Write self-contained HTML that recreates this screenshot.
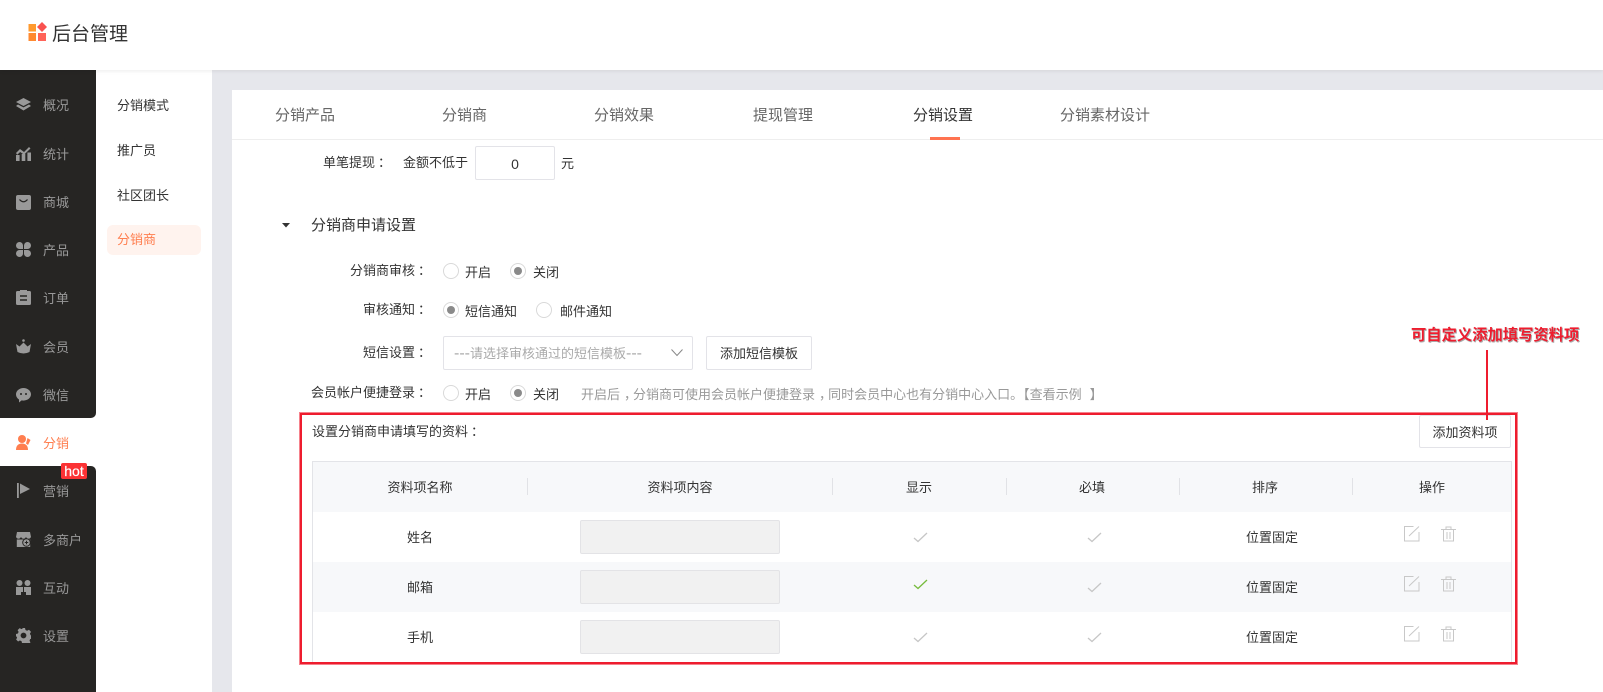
<!DOCTYPE html>
<html lang="zh"><head><meta charset="utf-8"><title>后台管理</title>
<style>
*{box-sizing:border-box}
html,body{margin:0;padding:0;width:1603px;height:692px;overflow:hidden;background:#fff}
body{position:relative;font-family:"Liberation Sans","Noto Sans CJK SC",sans-serif;font-size:13px;color:#333}
.a{position:absolute;white-space:nowrap;line-height:18px}
.b{position:absolute}
.nav{position:absolute;left:43px;color:#999;line-height:18px;font-size:13px;white-space:nowrap}
.ic{position:absolute;left:16px;width:15px;height:15px;fill:#999}
.sub{position:absolute;left:117px;line-height:18px;color:#333}
.tab{position:absolute;top:106px;font-size:15px;line-height:20px;color:#666;white-space:nowrap}
.r{position:absolute;width:16px;height:16px;border:1px solid #d9d9d9;border-radius:50%;background:#fff}
.r.on:after{content:"";position:absolute;left:3px;top:3px;width:8px;height:8px;border-radius:50%;background:#8a8a8a}
.lb{position:absolute;text-align:right;line-height:18px;white-space:nowrap;color:#333}
.co{font-family:"Noto Sans CJK TC",sans-serif;position:relative;left:3px}
.cm{position:relative;left:4px}
.hy{font-size:16px}
.box{position:absolute;border:1px solid #e3e3e8;border-radius:2px;background:#fff}
.th,.c{position:absolute;transform:translateX(-50%);line-height:18px;white-space:nowrap;color:#333}
.dv{position:absolute;top:478px;width:1px;height:17px;background:#e1e2e6}
.inp{position:absolute;left:580px;width:200px;height:34px;background:#f1f1f1;border:1px solid #e3e3e6;border-radius:2px}
.ck,.tool{position:absolute}
</style></head><body>
<div class="b" style="left:0;top:0;width:1603px;height:70px;background:#fff;box-shadow:0 1px 4px rgba(0,0,0,.08);z-index:5"></div>
<svg class="b" style="left:28px;top:22px;z-index:6" width="20" height="20" viewBox="0 0 20 20"><rect x="0.500" y="2" width="7.500" height="7.500" fill="#ff9a2e"/><rect x="0.500" y="11" width="7.500" height="8" fill="#ff8a30"/><rect x="10" y="11" width="8" height="8" fill="#ff6459"/><path d="M14 0l5 5-5 5-5-5z" fill="#f9524f"/></svg>
<div class="a" style="left:52px;top:22px;font-size:19px;line-height:26px;color:#333;z-index:6">后台管理</div>

<div class="b" style="left:0;top:70px;width:96px;height:622px;background:#262523"></div>
<div class="b" style="left:0;top:418px;width:96px;height:48px;background:#fff"></div>
<div class="b" style="left:96px;top:70px;width:116px;height:622px;background:#fff"></div>
<div class="b" style="left:88px;top:410px;width:8px;height:8px;background:#fff"></div>
<div class="b" style="left:88px;top:410px;width:8px;height:8px;background:#262523;border-radius:0 0 5px 0"></div>
<div class="b" style="left:88px;top:466px;width:8px;height:8px;background:#fff"></div>
<div class="b" style="left:88px;top:466px;width:8px;height:8px;background:#262523;border-radius:0 5px 0 0"></div>
<div class="b" style="left:212px;top:70px;width:1391px;height:622px;background:#fff"></div>
<div class="b" style="left:212px;top:70px;width:20px;height:622px;background:#e6e7ec"></div>
<div class="b" style="left:212px;top:70px;width:1391px;height:20px;background:#e6e7ec"></div>

<svg class="ic" style="top:97px" viewBox="0 0 15 15"><path d="M7.500 1L15 5 7.500 9 0 5z"/><path d="M2 7.500L7.500 10.400 13 7.500 15 9 7.500 13.500 0 9z"/></svg>
<div class="nav" style="top:97px">概况</div>
<svg class="ic" style="top:146px" viewBox="0 0 15 15"><rect x="0" y="9" width="3.600" height="6"/><rect x="5.700" y="8" width="3.600" height="7"/><rect x="11.400" y="6.500" width="3.600" height="8.500"/><path d="M0 7l4-4 4 3 5-5 1.500 1.500L8 8.800 4.200 6 1.200 8.800z"/></svg>
<div class="nav" style="top:146px">统计</div>
<svg class="ic" style="top:195px" viewBox="0 0 15 15"><path d="M2 0h11a2 2 0 0 1 2 2v11a2 2 0 0 1-2 2H2a2 2 0 0 1-2-2V2a2 2 0 0 1 2-2z"/><path d="M3.500 4.500Q7.500 9 11.500 4.500" fill="none" stroke="#262523" stroke-width="1.300"/></svg>
<div class="nav" style="top:194px">商城</div>
<svg class="ic" style="top:242px" viewBox="0 0 15 15"><path d="M3.500 0A3.500 3.500 0 0 1 7 3.500V7H3.500a3.500 3.500 0 0 1 0-7zM11.500 0a3.500 3.500 0 0 1 0 7H8V3.500A3.500 3.500 0 0 1 11.500 0zM3.500 8H7v3.500A3.500 3.500 0 1 1 3.500 8zM8 8h3.500A3.500 3.500 0 1 1 8 11.500z"/></svg>
<div class="nav" style="top:242px">产品</div>
<svg class="ic" style="top:290px" viewBox="0 0 15 15"><path d="M1.500 1H4V0h7v1h2.500A1.500 1.500 0 0 1 15 2.500v11a1.500 1.500 0 0 1-1.500 1.500h-12A1.500 1.500 0 0 1 0 13.500v-11A1.500 1.500 0 0 1 1.500 1z"/><path d="M4 6h7M4 10h7" stroke="#262523" stroke-width="1.400"/></svg>
<div class="nav" style="top:290px">订单</div>
<svg class="ic" style="top:339px" viewBox="0 0 15 15"><circle cx="7.500" cy="1.500" r="1.300"/><path d="M0 5l3.500 2.500L7.500 3.500l4 4L15 5l-1.500 8q-6 3-12 0z"/></svg>
<div class="nav" style="top:339px">会员</div>
<svg class="ic" style="top:388px" viewBox="0 0 15 15"><path d="M7.500 0C11.600 0 15 2.800 15 6.300s-3.400 6.300-7.500 6.300c-.7 0-1.300-.1-1.900-.2L3 14.500v-3C1.200 10.400 0 8.500 0 6.300 0 2.800 3.400 0 7.500 0z"/><circle cx="5" cy="6" r="1" fill="#262523"/><circle cx="10" cy="6" r="1" fill="#262523"/></svg>
<div class="nav" style="top:387px">微信</div>
<svg class="ic" style="top:435px;fill:#ff7e4f" viewBox="0 0 15 15"><circle cx="6" cy="4" r="4"/><path d="M0 15c0-4 2-6.500 6-6.500s6 2.500 6 6.500z"/><path d="M11.500 3l3 2-2.500 5-2-1.500z"/></svg>
<div class="nav" style="top:435px;color:#ff7e4f">分销</div>
<div class="b" style="left:61px;top:463px;width:26px;height:16px;background:#fb3234;color:#fff;border-radius:2px;font-size:14px;line-height:16px;text-align:center;-webkit-text-stroke:.2px #fff">hot</div>
<svg class="ic" style="top:483px" viewBox="0 0 15 15"><rect x="1" y="0" width="1.800" height="15"/><path d="M4 .5L14 6 4 11z"/></svg>
<div class="nav" style="top:483px">营销</div>
<svg class="ic" style="top:532px" viewBox="0 0 15 15"><path d="M1 0h13l1 5q-1 1.800-2.500 1.800T10 5q-1 1.800-2.500 1.800T5 5q-1 1.800-2.500 1.800T0 5z"/><path d="M.8 7.500h13.400V15H.8z"/><circle cx="10.500" cy="10.500" r="3.800" stroke="#262523" fill="#999"/><path d="M8.800 10.500h3.400M10.500 8.800v3.400" stroke="#262523"/></svg>
<div class="nav" style="top:532px">多商户</div>
<svg class="ic" style="top:580px" viewBox="0 0 15 15"><circle cx="3.500" cy="3" r="3"/><circle cx="11.500" cy="3" r="3"/><path d="M0 7h7v8H0zM8 7h7v8H8z"/><path d="M5 15v-3h5v3" fill="#262523"/></svg>
<div class="nav" style="top:580px">互动</div>
<svg class="ic" style="top:628px" viewBox="0 0 15 15"><path d="M6 0h3l.5 2 1.600.7L13 1.700l2 2.200-1.100 1.700.7 1.600 1.400.4v3l-1.800.4-.7 1.700 1 1.700-2.100 2-1.800-1-1.600.6L9 15H6l-.5-1.900-1.600-.6-1.800 1-2-2 1-1.800-.7-1.600L0 9V6l1.900-.5.700-1.600-1-1.800 2.100-2 1.700 1 1.600-.7z"/><circle cx="7.500" cy="7.500" r="2.900" fill="#262523"/></svg>
<div class="nav" style="top:628px">设置</div>

<div class="sub" style="top:97px">分销模式</div>
<div class="sub" style="top:142px">推广员</div>
<div class="sub" style="top:187px">社区团长</div>
<div class="b" style="left:107px;top:225px;width:94px;height:30px;background:#fff3ee;border-radius:6px"></div>
<div class="sub" style="top:231px;color:#ff7e4f">分销商</div>

<div class="b" style="left:232px;top:139px;width:1371px;height:1px;background:#eee"></div>
<div class="tab" style="left:275px">分销产品</div>
<div class="tab" style="left:442px">分销商</div>
<div class="tab" style="left:594px">分销效果</div>
<div class="tab" style="left:753px">提现管理</div>
<div class="tab" style="left:913px;color:#333">分销设置</div>
<div class="tab" style="left:1060px">分销素材设计</div>
<div class="b" style="left:930px;top:137px;width:30px;height:3px;background:#ff7350"></div>

<div class="lb" style="top:153px;right:1215px">单笔提现<span class="co">：</span></div>
<div class="a" style="left:403px;top:154px">金额不低于</div>
<div class="box" style="left:475px;top:146px;width:80px;height:34px;text-align:center;line-height:34px;font-size:14px">0</div>
<div class="a" style="left:561px;top:155px">元</div>
<svg class="b" style="left:282px;top:223px" width="8" height="5"><path d="M0 0h8L4 4.500z" fill="#333"/></svg>
<div class="a" style="left:311px;top:216px;font-size:15px;line-height:20px">分销商申请设置</div>

<div class="lb" style="top:261px;right:1175px">分销商审核<span class="co">：</span></div>
<div class="r" style="left:443px;top:263px"></div><div class="a" style="left:465px;top:264px">开启</div>
<div class="r on" style="left:510px;top:263px"></div><div class="a" style="left:533px;top:264px">关闭</div>
<div class="lb" style="top:300px;right:1175px">审核通知<span class="co">：</span></div>
<div class="r on" style="left:443px;top:302px"></div><div class="a" style="left:465px;top:303px">短信通知</div>
<div class="r" style="left:536px;top:302px"></div><div class="a" style="left:560px;top:303px">邮件通知</div>
<div class="lb" style="top:343px;right:1175px">短信设置<span class="co">：</span></div>
<div class="box" style="left:443px;top:336px;width:250px;height:34px"></div>
<div class="a" style="left:454px;top:345px;color:#aaa"><span class="hy">---</span>请选择审核通过的短信模板<span class="hy">---</span></div>
<svg class="b" style="left:671px;top:349px" width="12" height="8"><path d="M.5.500L6 6.500 11.500.500" fill="none" stroke="#888"/></svg>
<div class="box" style="left:706px;top:336px;width:106px;height:34px;text-align:center;line-height:34px">添加短信模板</div>
<div class="lb" style="top:383px;right:1175px">会员帐户便捷登录<span class="co">：</span></div>
<div class="r" style="left:443px;top:385px"></div><div class="a" style="left:465px;top:386px">开启</div>
<div class="r on" style="left:510px;top:385px"></div><div class="a" style="left:533px;top:386px">关闭</div>
<div class="a" style="left:581px;top:386px;color:#999">开启后<span class="cm">，</span>分销商可使用会员帐户便捷登录<span class="cm">，</span>同时会员中心也有分销中心入口。【查看示例<span style="position:relative;left:8px">】</span></div>

<div class="a" style="left:312px;top:422px">设置分销商申请填写的资料<span class="co">：</span></div>
<div class="box" style="left:1419px;top:415px;width:92px;height:33px;text-align:center;line-height:33px">添加资料项</div>

<div class="b" style="left:312px;top:461px;width:1200px;height:202px;border:1px solid #e3e4e8;border-bottom:0"></div>
<div class="b" style="left:313px;top:462px;width:1198px;height:50px;background:#f7f8fa"></div>
<div class="b" style="left:313px;top:562px;width:1198px;height:50px;background:#f7f8fa"></div>
<div class="dv" style="left:527px"></div><div class="dv" style="left:832px"></div><div class="dv" style="left:1006px"></div><div class="dv" style="left:1179px"></div><div class="dv" style="left:1352px"></div>
<div class="th" style="left:420px;top:479px">资料项名称</div>
<div class="th" style="left:680px;top:479px">资料项内容</div>
<div class="th" style="left:919px;top:479px">显示</div>
<div class="th" style="left:1092px;top:479px">必填</div>
<div class="th" style="left:1265px;top:479px">排序</div>
<div class="th" style="left:1432px;top:479px">操作</div>

<div class="c" style="left:420px;top:529px">姓名</div><div class="inp" style="top:520px"></div>
<div class="c" style="left:420px;top:579px">邮箱</div><div class="inp" style="top:570px"></div>
<div class="c" style="left:420px;top:629px">手机</div><div class="inp" style="top:620px"></div>
<div class="c" style="left:1272px;top:529px">位置固定</div>
<div class="c" style="left:1272px;top:579px">位置固定</div>
<div class="c" style="left:1272px;top:629px">位置固定</div>

<svg class="ck" style="left:913px;top:532px" width="15" height="11"><path d="M1 6l4 3.500L14 1" fill="none" stroke="#c6c6c6" stroke-width="1.300"/></svg>
<svg class="ck" style="left:1087px;top:532px" width="15" height="11"><path d="M1 6l4 3.500L14 1" fill="none" stroke="#c6c6c6" stroke-width="1.300"/></svg>
<svg class="ck" style="left:913px;top:579px" width="15" height="11"><path d="M1 6l4 3.500L14 1" fill="none" stroke="#76bb3c" stroke-width="1.300"/></svg>
<svg class="ck" style="left:1087px;top:582px" width="15" height="11"><path d="M1 6l4 3.500L14 1" fill="none" stroke="#c6c6c6" stroke-width="1.300"/></svg>
<svg class="ck" style="left:913px;top:632px" width="15" height="11"><path d="M1 6l4 3.500L14 1" fill="none" stroke="#c6c6c6" stroke-width="1.300"/></svg>
<svg class="ck" style="left:1087px;top:632px" width="15" height="11"><path d="M1 6l4 3.500L14 1" fill="none" stroke="#c6c6c6" stroke-width="1.300"/></svg>

<svg class="tool" style="left:1404px;top:526px" width="16" height="16"><path d="M9.500 .5H.5v14.500h14.500V6M5 10L15 .5" fill="none" stroke="#c8c8c8"/></svg>
<svg class="tool" style="left:1441px;top:526px" width="16" height="16"><path d="M0 3.500h15M5 3V1h5v2M2.500 3.500V15h10V3.500M6 6v7M9 6v7" fill="none" stroke="#c8c8c8"/></svg>
<svg class="tool" style="left:1404px;top:576px" width="16" height="16"><path d="M9.500 .5H.5v14.500h14.500V6M5 10L15 .5" fill="none" stroke="#c8c8c8"/></svg>
<svg class="tool" style="left:1441px;top:576px" width="16" height="16"><path d="M0 3.500h15M5 3V1h5v2M2.500 3.500V15h10V3.500M6 6v7M9 6v7" fill="none" stroke="#c8c8c8"/></svg>
<svg class="tool" style="left:1404px;top:626px" width="16" height="16"><path d="M9.500 .5H.5v14.500h14.500V6M5 10L15 .5" fill="none" stroke="#c8c8c8"/></svg>
<svg class="tool" style="left:1441px;top:626px" width="16" height="16"><path d="M0 3.500h15M5 3V1h5v2M2.500 3.500V15h10V3.500M6 6v7M9 6v7" fill="none" stroke="#c8c8c8"/></svg>

<div class="b" style="left:300px;top:413px;width:1217px;height:251px;border:2px solid #ee1c2e;box-shadow:0 0 0 1px rgba(238,28,46,.55)"></div>
<div class="b" style="left:1486px;top:350px;width:2px;height:70px;background:#ee1c2e"></div>
<div class="a" style="left:1411px;top:327px;font-size:15.3px;font-weight:bold;color:#ee1c2e;text-shadow:1px 1px 0 #aaa,-1px 0 0 #fff,0 -1px 0 #fff,1px 0 0 #eee,0 1px 0 #ddd">可自定义添加填写资料项</div>
</body></html>
